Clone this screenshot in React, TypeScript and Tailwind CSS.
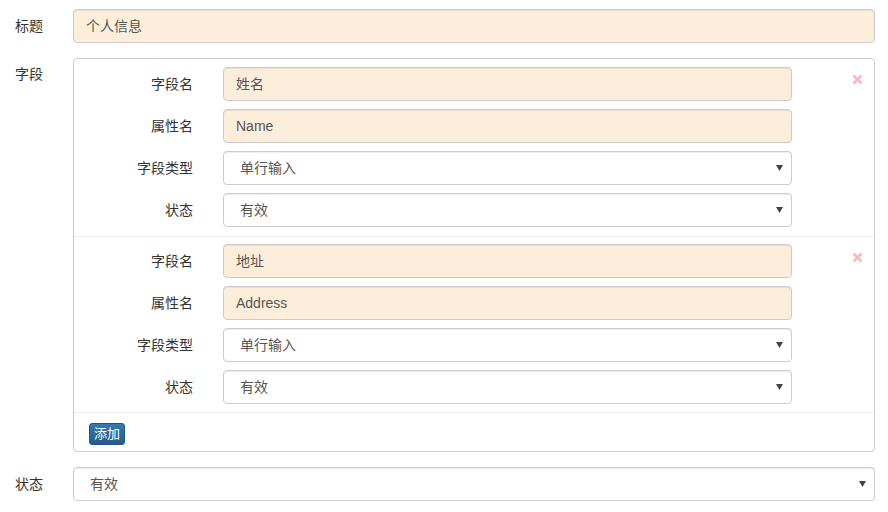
import React from "react";

const font = { fontFamily: '"Liberation Sans", "Noto Sans CJK SC", sans-serif' };

const inputCls =
  "h-[34px] w-full rounded border border-[#ccc] bg-[#fdeedb] px-3 text-[14px] text-[#555] flex items-center shadow-[inset_0_1px_1px_rgba(0,0,0,0.075)]";

const Select = ({ value, pad = "pl-4" }: { value: string; pad?: string }) => (
  <div
    className={`h-[34px] w-full rounded border border-[#ccc] bg-white ${pad} pr-2 text-[14px] text-[#555] flex items-center justify-between shadow-[inset_0_1px_1px_rgba(0,0,0,0.075)]`}
  >
    <span>{value}</span>
    <svg width="7" height="6" viewBox="0 0 7 6">
      <path d="M0 0H7L3.5 6Z" fill="#444" />
    </svg>
  </div>
);

const Row = ({ label, children }: { label: string; children: React.ReactNode }) => (
  <div className="flex items-center">
    <div className="w-[119px] text-right text-[14px] text-[#333]">{label}</div>
    <div className="ml-[30px] w-[569px]">{children}</div>
  </div>
);

const FieldGroup = ({ name, attr, pad }: { name: string; attr: string; pad: string }) => (
  <div className={`relative flex flex-col gap-2 border-b border-[#eee] ${pad}`}>
    <Row label="字段名">
      <div className={inputCls}>{name}</div>
    </Row>
    <Row label="属性名">
      <div className={inputCls}>{attr}</div>
    </Row>
    <Row label="字段类型">
      <Select value="单行输入" />
    </Row>
    <Row label="状态">
      <Select value="有效" />
    </Row>
    <svg className="absolute right-[11px] top-[15px]" width="11" height="11" viewBox="0 0 11 11">
      <path d="M1.5 1.5L9.5 9.5M9.5 1.5L1.5 9.5" stroke="#f9b9b9" strokeWidth="2.6" />
    </svg>
  </div>
);

export default function App() {
  return (
    <div className="h-[512px] w-[888px] bg-white" style={font}>
      <div className="flex flex-col pt-[9px] pr-[13px]">
        <div className="flex items-center">
          <div className="w-[73px] pl-[15px] text-[14px] text-[#333]">标题</div>
          <div className={`${inputCls} flex-1`}>个人信息</div>
        </div>

        <div className="mt-[15px] flex items-start">
          <div className="w-[73px] pl-[15px] pt-[6px] text-[14px] text-[#333]">字段</div>
          <div className="flex-1 rounded border border-[#ccc] h-[394px] flex flex-col">
            <FieldGroup name="姓名" attr="Name" pad="pt-[8px] pb-[9px]" />
            <FieldGroup name="地址" attr="Address" pad="pt-[7px] pb-[8px]" />
            <div className="pl-[15px] pt-[8px]">
              <button className="h-[22px] w-[36px] rounded-[3px] border border-[#245580] bg-gradient-to-b from-[#337ab7] to-[#265a88] text-[13px] leading-none text-white">
                添加
              </button>
            </div>
          </div>
        </div>

        <div className="mt-[15px] flex items-center">
          <div className="w-[73px] pl-[15px] text-[14px] text-[#333]">状态</div>
          <div className="flex-1">
            <Select value="有效" pad="pl-[16px]" />
          </div>
        </div>
      </div>
    </div>
  );
}
